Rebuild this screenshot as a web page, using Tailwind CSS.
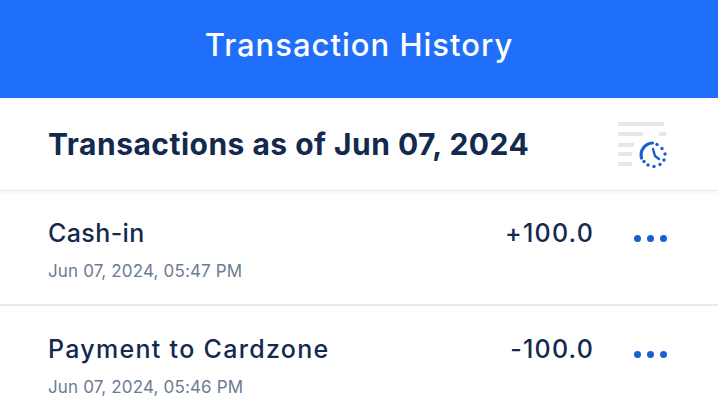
<!DOCTYPE html>
<html lang="en">
<head>
<meta charset="UTF-8">
<title>Transaction History</title>
<script src="https://cdn.jsdelivr.net/npm/@tailwindcss/browser@4"></script>
</head>
<body class="w-[718px] h-[403px] overflow-hidden bg-white font-['Inter',sans-serif]">
  <header class="h-[98px] bg-[#1f6ffb] flex items-center justify-center pb-[8px]">
    <h1 class="text-[31px] font-medium tracking-[1px] text-white">Transaction History</h1>
  </header>
  <section class="h-[93px] flex items-center justify-between pl-[48px] pr-[50px] border-b border-[#e9eaed] shadow-[0_2px_3px_rgba(0,0,0,0.04)]">
    <h2 class="text-[30px] font-bold tracking-[0.48px] text-[#132a4e]">Transactions as of Jun 07, 2024</h2>
    <!-- list with clock icon -->
    <svg class="mt-[4px]" width="52" height="48" viewBox="0 0 52 48" fill="none">
      <path d="M2 2H48M2 12H27M43 12H50M2 23H18M2 32H16M2 42H16" stroke="#e6e7ea" stroke-width="4"/>
      <path d="M25.5 36a12 12 0 0 1 11-15" stroke="#1a5fd0" stroke-width="3.2" stroke-linecap="round"/>
      <path d="M37 27l2 7 4 3" stroke="#1a5fd0" stroke-width="2.4" stroke-linecap="round" stroke-linejoin="round"/>
      <g fill="#1a5fd0">
        <circle cx="41" cy="22.500" r="1.700"/><circle cx="46" cy="26.500" r="1.700"/><circle cx="49" cy="32" r="1.700"/><circle cx="48" cy="38" r="1.700"/><circle cx="44" cy="42.500" r="1.700"/><circle cx="38" cy="44.500" r="1.700"/><circle cx="32" cy="43" r="1.700"/><circle cx="28" cy="39.500" r="1.700"/>
      </g>
    </svg>
  </section>
  <ul>
    <li class="h-[115px] border-b-2 border-[#e8e9ec] pl-[48px] pr-[51px] flex justify-between">
      <div class="pt-[26px]">
        <p class="text-[25px] leading-[32px] font-medium tracking-[0.4px] text-[#132a4e]">Cash-in</p>
        <p class="mt-[10px] text-[17px] leading-[24px] tracking-[0.15px] text-[#6b7c93]">Jun 07, 2024, 05:47 PM</p>
      </div>
      <div class="pt-[26px] flex gap-[40px]">
        <span class="text-[25px] leading-[32px] font-medium tracking-[1.2px] text-[#132a4e]">+100.0</span>
        <span class="flex gap-[6px] pt-[18px]">
          <i class="size-[7px] rounded-full bg-[#1a5fd0]"></i><i class="size-[7px] rounded-full bg-[#1a5fd0]"></i><i class="size-[7px] rounded-full bg-[#1a5fd0]"></i>
        </span>
      </div>
    </li>
    <li class="h-[115px] pl-[48px] pr-[51px] flex justify-between">
      <div class="pt-[27px]">
        <p class="text-[25px] leading-[32px] font-medium tracking-[1.3px] text-[#132a4e]">Payment to Cardzone</p>
        <p class="mt-[10px] text-[17px] leading-[24px] tracking-[0.15px] text-[#6b7c93]">Jun 07, 2024, 05:46 PM</p>
      </div>
      <div class="pt-[27px] flex gap-[40px]">
        <span class="text-[25px] leading-[32px] font-medium tracking-[1.2px] text-[#132a4e]">-100.0</span>
        <span class="flex gap-[6px] pt-[18px]">
          <i class="size-[7px] rounded-full bg-[#1a5fd0]"></i><i class="size-[7px] rounded-full bg-[#1a5fd0]"></i><i class="size-[7px] rounded-full bg-[#1a5fd0]"></i>
        </span>
      </div>
    </li>
  </ul>
</body>
</html>
